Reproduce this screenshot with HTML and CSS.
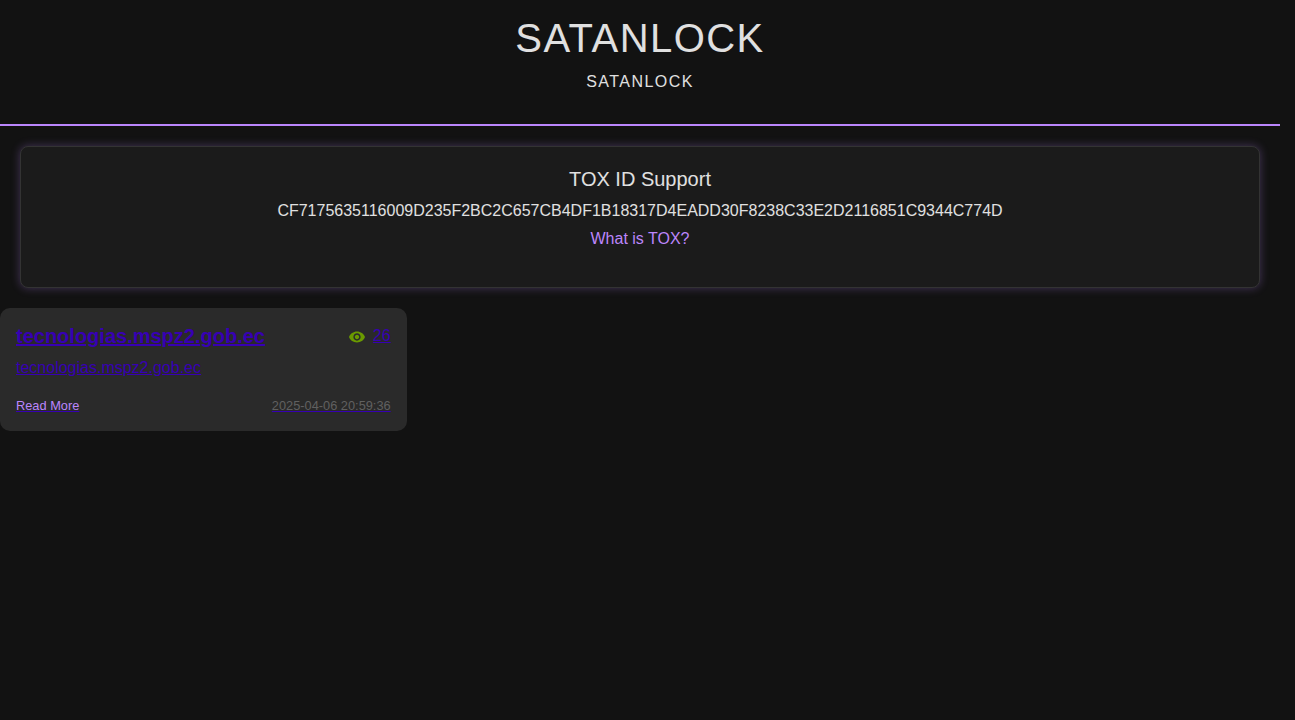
FILE: index.html
```html
<!DOCTYPE html>
<html lang="en">
<head>
  <meta charset="UTF-8">
  <meta name="viewport" content="width=device-width, initial-scale=1.0">
  <title>SATANLOCK</title>
  <link rel="stylesheet" href="styles.css">
</head>
<body>
  <header class="site-header">
    <h1 class="site-title">SATANLOCK</h1>
    <p class="site-subtitle">SATANLOCK</p>
  </header>

  <main>
    <section class="support-box">
      <h2 class="support-title">TOX ID Support</h2>
      <p class="support-id">CF7175635116009D235F2BC2C657CB4DF1B18317D4EADD30F8238C33E2D2116851C9344C774D</p>
      <a class="support-link" href="#tox">What is TOX?</a>
    </section>

    <div class="card-grid">
      <a class="card" href="#post">
        <div class="card-header">
          <h3 class="card-title">tecnologias.mspz2.gob.ec</h3>
          <div class="card-views">
            <svg class="eye-icon" viewBox="1 4.5 22 15" aria-hidden="true">
              <path d="M12 4.5C7 4.5 2.73 7.61 1 12c1.73 4.39 6 7.5 11 7.5s9.27-3.11 11-7.5c-1.73-4.39-6-7.5-11-7.5zM12 17c-2.76 0-5-2.24-5-5s2.24-5 5-5 5 2.24 5 5-2.24 5-5 5zm0-8c-1.66 0-3 1.34-3 3s1.34 3 3 3 3-1.34 3-3-1.34-3-3-3z"/>
            </svg>
            <span>26</span>
          </div>
        </div>
        <p class="card-text">tecnologias.mspz2.gob.ec</p>
        <div class="card-footer">
          <span class="read-more">Read More</span>
          <span class="card-date">2025-04-06 20:59:36</span>
        </div>
      </a>
    </div>
  </main>
</body>
</html>
```
FILE: styles.css
```css
* {
  box-sizing: border-box;
}
body {
  background-color: #121212;
  color: #e0e0e0;
  font-family: "Liberation Sans", Arial, sans-serif;
  font-size: 16px;
  line-height: 24px;
  margin: 0;
  padding-right: 15px;
}
h1, h2, h3, p {
  margin: 0;
}

/* Header */
.site-header {
  text-align: center;
  padding: 14px 16px 30px;
  border-bottom: 2px solid #bb86fc;
  letter-spacing: 0.09rem;
}
.site-title {
  font-size: 40px;
  font-weight: normal;
  line-height: 48px;
  margin-bottom: 8px;
}

/* Support box */
.support-box {
  margin: 20px;
  padding: 20px 20px 36px;
  text-align: center;
  background-color: #1b1b1b;
  border: 1px solid #333;
  border-radius: 8px;
  box-shadow: 0 0 10px rgba(187, 134, 252, 0.3);
}
.support-title {
  font-size: 20px;
  font-weight: normal;
  margin-bottom: 8px;
}
.support-id {
  margin-bottom: 4px;
  overflow-wrap: anywhere;
}
.support-link {
  display: block;
  color: #bb86fc;
  text-decoration: none;
}

/* Cards */
.card-grid {
  display: grid;
  grid-template-columns: repeat(3, 1fr);
  gap: 30px;
}
.card {
  display: block;
  padding: 16px;
  background-color: #2a2a2a;
  border-radius: 10px;
  color: #3700b3;
  text-decoration: underline;
}
.card-header,
.card-footer {
  display: flex;
  justify-content: space-between;
  align-items: center;
}
.card-header {
  margin-bottom: 8px;
}
.card-title {
  font-size: 20px;
}
.card-views {
  display: flex;
  align-items: center;
  gap: 8px;
}
.eye-icon {
  width: 16px;
  height: 12px;
  margin-top: 2px;
  fill: #6a9a00;
}
.card-text {
  margin-bottom: 16px;
}
.card-footer {
  font-size: 0.8rem;
  line-height: 19px;
}
.read-more {
  color: #bb86fc;
}
.card-date {
  color: #606060;
}

@media (max-width: 900px) {
  .card-grid {
    grid-template-columns: 1fr;
  }
}
```
